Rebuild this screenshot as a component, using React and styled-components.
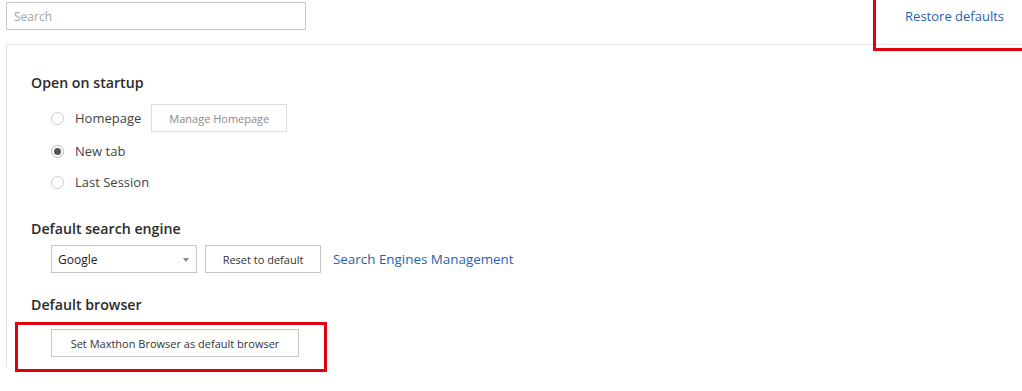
import React from "react";
import styled, { createGlobalStyle } from "styled-components";

const Global = createGlobalStyle`
  html, body { margin: 0; padding: 0; background: #fff; }
  body { font-family: "Open Sans", "Noto Sans", sans-serif; color: #333; }
  * { box-sizing: border-box; }
`;

const Page = styled.div`
  position: relative;
  width: 1022px;
  height: 391px;
  overflow: hidden;
  background: #fff;
`;

const Header = styled.div`
  display: flex;
  align-items: flex-start;
  justify-content: space-between;
  height: 45px;
  margin-left: 6px;
  border-bottom: 1px solid #e3e3e3;
  padding-top: 2px;
`;

const SearchInput = styled.input`
  width: 300px;
  height: 28px;
  border: 1px solid #c9c9c9;
  padding: 0 7px;
  font-family: inherit;
  font-size: 12px;
  color: #333;
  outline: none;
  &::placeholder { color: #a5a5a5; }
`;

const RestoreLink = styled.a`
  margin-top: 5px;
  margin-right: 18px;
  font-size: 13px;
  color: #1f63ad;
  text-decoration: none;
  cursor: pointer;
`;

const Annotation = styled.div`
  position: absolute;
  border: 3px solid #e0000f;
  pointer-events: none;
  left: ${(p) => p.$left}px;
  top: ${(p) => p.$top}px;
  width: ${(p) => p.$width}px;
  height: ${(p) => p.$height}px;
`;

const Main = styled.div`
  margin-left: 6px;
  height: 322px;
  border-left: 1px solid #e3e3e3;
  padding: 28px 0 0 24px;
`;

const Section = styled.section`
  display: flex;
  flex-direction: column;
  margin-bottom: ${(p) => p.$mb || 0}px;
`;

const Heading = styled.h3`
  margin: 0;
  font-size: 14.2px;
  font-weight: 600;
  color: #2b2b2b;
  line-height: 20px;
`;

const Options = styled.div`
  display: flex;
  flex-direction: column;
  padding-left: 20px;
  margin-top: ${(p) => p.$mt || 0}px;
`;

const OptionRow = styled.label`
  display: flex;
  align-items: center;
  flex-shrink: 0;
  height: ${(p) => p.$h || 30}px;
  font-size: 13px;
  color: #444;
  cursor: pointer;
`;

const Radio = styled.span`
  width: 13px;
  height: 13px;
  border-radius: 50%;
  border: 1px solid ${(p) => (p.$checked ? "#b5b5b5" : "#cdcdcd")};
  background: #fff;
  margin-right: 11px;
  display: flex;
  align-items: center;
  justify-content: center;
  &::after {
    content: "";
    width: 7px;
    height: 7px;
    border-radius: 50%;
    background: ${(p) => (p.$checked ? "#555" : "transparent")};
  }
`;

const Button = styled.button`
  height: ${(p) => p.$h || 28}px;
  width: ${(p) => p.$w}px;
  padding: 0;
  margin-left: ${(p) => p.$ml || 0}px;
  border: 1px solid ${(p) => (p.$light ? "#dedede" : "#c6c6c6")};
  background: #fff;
  font-family: inherit;
  font-size: 11px;
  color: ${(p) => (p.$light ? "#8a8a8a" : "#333")};
  cursor: pointer;
  white-space: nowrap;
`;

const ControlRow = styled.div`
  display: flex;
  align-items: center;
  padding-left: 20px;
  margin-top: ${(p) => p.$mt || 0}px;
`;

const Select = styled.div`
  position: relative;
  width: 146px;
  height: 28px;
  border: 1px solid #c6c6c6;
  display: flex;
  align-items: center;
  padding-left: 6px;
  font-size: 12px;
  color: #222;
  &::after {
    content: "";
    position: absolute;
    right: 7px;
    top: 12px;
    border-left: 3px solid transparent;
    border-right: 3px solid transparent;
    border-top: 4px solid #8a8a8a;
  }
`;

const Link = styled.a`
  margin-left: 12px;
  font-size: 13.4px;
  color: #1f63ad;
  text-decoration: none;
  cursor: pointer;
`;

export default function App() {
  return (
    <Page>
      <Global />
      <Header>
        <SearchInput placeholder="Search" />
        <RestoreLink>Restore defaults</RestoreLink>
      </Header>
      <Main>
        <Section $mb={22}>
          <Heading>Open on startup</Heading>
          <Options $mt={8}>
            <OptionRow $h={34}>
              <Radio />
              Homepage
              <Button $light $ml={10} $h={28} $w={136}>Manage Homepage</Button>
            </OptionRow>
            <OptionRow $h={32}>
              <Radio $checked />
              New tab
            </OptionRow>
            <OptionRow $h={30}>
              <Radio />
              Last Session
            </OptionRow>
          </Options>
        </Section>
        <Section $mb={22}>
          <Heading>Default search engine</Heading>
          <ControlRow $mt={6}>
            <Select>Google</Select>
            <Button $ml={8} $h={28} $w={116}>Reset to default</Button>
            <Link>Search Engines Management</Link>
          </ControlRow>
        </Section>
        <Section>
          <Heading>Default browser</Heading>
          <ControlRow $mt={14}>
            <Button $h={28} $w={248}>Set Maxthon Browser as default browser</Button>
          </ControlRow>
        </Section>
      </Main>
      <Annotation $left={873} $top={-10} $width={160} $height={61} />
      <Annotation $left={15} $top={322} $width={312} $height={50} />
    </Page>
  );
}
